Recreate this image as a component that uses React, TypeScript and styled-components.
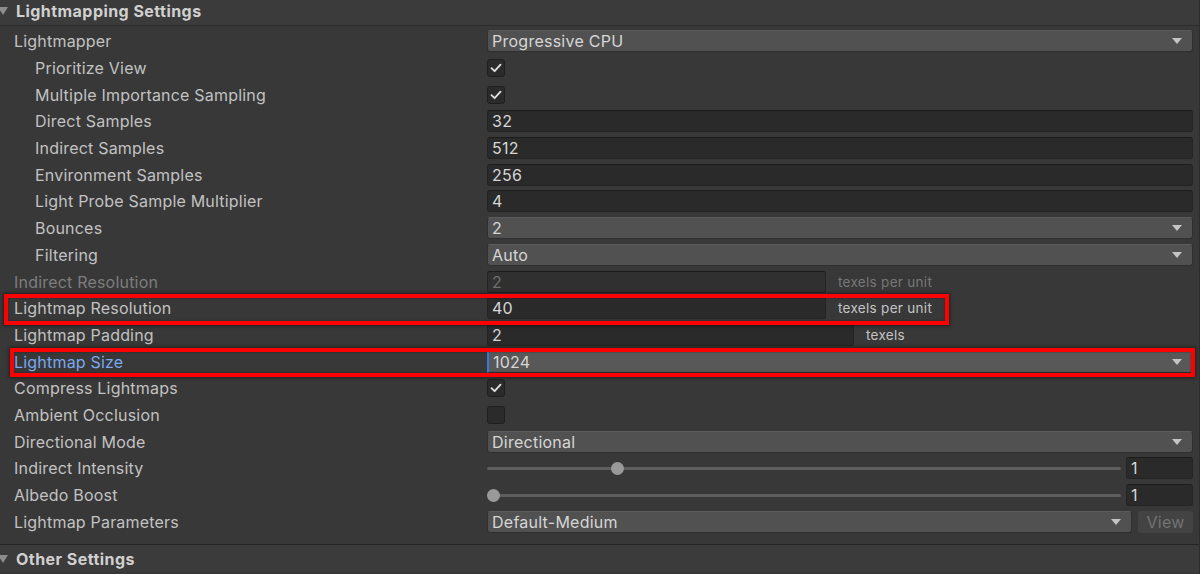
import React from "react";
import styled, { createGlobalStyle } from "styled-components";

const Global = createGlobalStyle`
  html, body { margin: 0; padding: 0; background: #383838; }
  body { font-family: Inter, "Noto Sans", sans-serif; font-size: 16px; color: #c4c4c4; overflow: hidden; }
`;

const Panel = styled.div`
  position: relative;
  width: 1200px;
  height: 574px;
  background: #383838;
  overflow: hidden;
  border-right: 1px solid #2c2c2c;
  box-sizing: border-box;
`;

const SectionHeader = styled.div<{ $top?: boolean }>`
  display: flex;
  align-items: center;
  gap: 8px;
  box-sizing: border-box;
  height: ${(p) => (p.$top ? 26 : 28)}px;
  padding-bottom: ${(p) => (p.$top ? 3 : 0)}px;
  background: #3b3b3b;
  border-bottom: ${(p) => (p.$top ? "1px solid #2d2d2d" : "none")};
  border-top: ${(p) => (p.$top ? "none" : "1px solid #242424")};
  font-weight: 700;
  color: #d0d0d0;
  font-size: 16px;
  letter-spacing: 0.45px;
`;

const Foldout = styled.span`
  width: 0;
  height: 0;
  margin-left: -2px;
  border-left: 5px solid transparent;
  border-right: 5px solid transparent;
  border-top: 8px solid #8c8c8c;
`;

const Rows = styled.div`
  padding-top: 2px;
  padding-bottom: 9px;
  display: flex;
  flex-direction: column;
`;

const Row = styled.div`
  display: grid;
  grid-template-columns: 487px 1fr;
  align-items: center;
  height: 26.7px;
  padding-right: 6px;
`;

const Label = styled.div<{ $indent?: boolean; $disabled?: boolean; $focus?: boolean }>`
  padding-left: ${(p) => (p.$indent ? 35 : 14)}px;
  color: ${(p) => (p.$disabled ? "#7d7d7d" : p.$focus ? "#7aa8ef" : "#c2c2c2")};
  white-space: nowrap;
  letter-spacing: 0.2px;
`;

const Value = styled.div`
  display: flex;
  align-items: center;
  gap: 6px;
  min-width: 0;
`;

const Dropdown = styled.div<{ $focus?: boolean }>`
  flex: 1;
  display: flex;
  align-items: center;
  justify-content: space-between;
  height: 22px;
  box-sizing: border-box;
  padding: 0 10px 0 4px;
  background: ${(p) => (p.$focus ? "#585858" : "#515151")};
  border: 1px solid #303030;
  border-top-color: #5a5a5a;
  border-left: ${(p) => (p.$focus ? "2px solid #3a79d8" : "1px solid #303030")};
  border-radius: ${(p) => (p.$focus ? "0 3px 3px 0" : "3px")};
  color: #d6d6d6;
  letter-spacing: 0.25px;
`;

const Arrow = styled.span`
  width: 0;
  height: 0;
  border-left: 5px solid transparent;
  border-right: 5px solid transparent;
  border-top: 6px solid #c4c4c4;
`;

const Field = styled.div<{ $w?: number; $disabled?: boolean }>`
  flex: ${(p) => (p.$w ? "0 0 auto" : "1")};
  width: ${(p) => (p.$w ? `${p.$w}px` : "auto")};
  height: 22px;
  box-sizing: border-box;
  display: flex;
  align-items: center;
  padding-left: 4px;
  background: ${(p) => (p.$disabled ? "#303030" : "#2a2a2a")};
  border: 1px solid #242424;
  border-top-color: #1c1c1c;
  border-radius: 3px;
  color: ${(p) => (p.$disabled ? "#6f6f6f" : "#d6d6d6")};
  letter-spacing: 0.25px;
`;

const Unit = styled.span<{ $disabled?: boolean }>`
  margin-left: 6px;
  font-size: 13.5px;
  color: ${(p) => (p.$disabled ? "#777" : "#c4c4c4")};
  letter-spacing: 0.3px;
`;

const Check = styled.div`
  width: 18px;
  height: 18px;
  box-sizing: border-box;
  background: #2b2b2b;
  border: 1px solid #1f1f1f;
  border-radius: 3px;
  display: flex;
  align-items: center;
  justify-content: center;
`;

const SliderTrack = styled.div`
  position: relative;
  flex: 1;
  height: 20px;
  margin-right: -1px;
  &::before {
    content: "";
    position: absolute;
    left: 0;
    right: 0;
    top: 50%;
    height: 3px;
    margin-top: -1px;
    background: #5e5e5e;
    border-radius: 2px;
  }
`;

const Thumb = styled.div`
  position: absolute;
  top: 50%;
  width: 13px;
  height: 13px;
  margin: -6px 0 0 -6.5px;
  border-radius: 50%;
  background: #999999;
`;

const NumField = styled(Field)`
  flex: 0 0 67px;
  width: 67px;
`;

const ViewButton = styled.div`
  flex: 0 0 55px;
  height: 22px;
  box-sizing: border-box;
  display: flex;
  align-items: center;
  justify-content: center;
  background: #434343;
  border-radius: 3px;
  color: #737373;
  letter-spacing: 0.3px;
`;

const Annotation = styled.div<{ $l: number; $t: number; $w: number; $h: number }>`
  position: absolute;
  left: ${(p) => p.$l}px;
  top: ${(p) => p.$t}px;
  width: ${(p) => p.$w}px;
  height: ${(p) => p.$h}px;
  box-sizing: border-box;
  border: 4px solid #ff0000;
  box-shadow: 0 0 3px 1px rgba(0, 0, 0, 0.45), inset 0 0 2px rgba(0, 0, 0, 0.4);
  pointer-events: none;
`;

const CheckMark = () => (
  <svg width="12" height="10" viewBox="0 0 12 10">
    <path d="M1.5 5.2 L4.6 8.2 L10.5 1.6" fill="none" stroke="#e0e0e0" strokeWidth="1.8" strokeLinecap="round" strokeLinejoin="round" />
  </svg>
);

const Drop = ({ text, focus }: { text: string; focus?: boolean }) => (
  <Dropdown $focus={focus}>
    <span>{text}</span>
    <Arrow />
  </Dropdown>
);

const Slider = ({ pos }: { pos: number }) => (
  <>
    <SliderTrack>
      <Thumb style={{ left: `calc(6.5px + (100% - 13px) * ${pos})` }} />
    </SliderTrack>
    <NumField>1</NumField>
  </>
);

export default function App() {
  return (
    <Panel>
      <Global />
      <SectionHeader $top>
        <Foldout />
        Lightmapping Settings
      </SectionHeader>
      <Rows>
        <Row>
          <Label>Lightmapper</Label>
          <Value><Drop text="Progressive CPU" /></Value>
        </Row>
        <Row>
          <Label $indent>Prioritize View</Label>
          <Value><Check><CheckMark /></Check></Value>
        </Row>
        <Row>
          <Label $indent>Multiple Importance Sampling</Label>
          <Value><Check><CheckMark /></Check></Value>
        </Row>
        <Row>
          <Label $indent>Direct Samples</Label>
          <Value><Field>32</Field></Value>
        </Row>
        <Row>
          <Label $indent>Indirect Samples</Label>
          <Value><Field>512</Field></Value>
        </Row>
        <Row>
          <Label $indent>Environment Samples</Label>
          <Value><Field>256</Field></Value>
        </Row>
        <Row>
          <Label $indent>Light Probe Sample Multiplier</Label>
          <Value><Field>4</Field></Value>
        </Row>
        <Row>
          <Label $indent>Bounces</Label>
          <Value><Drop text="2" /></Value>
        </Row>
        <Row>
          <Label $indent>Filtering</Label>
          <Value><Drop text="Auto" /></Value>
        </Row>
        <Row>
          <Label $disabled>Indirect Resolution</Label>
          <Value>
            <Field $w={339} $disabled>2</Field>
            <Unit $disabled>texels per unit</Unit>
          </Value>
        </Row>
        <Row>
          <Label>Lightmap Resolution</Label>
          <Value>
            <Field $w={339}>40</Field>
            <Unit>texels per unit</Unit>
          </Value>
        </Row>
        <Row>
          <Label>Lightmap Padding</Label>
          <Value>
            <Field $w={367}>2</Field>
            <Unit>texels</Unit>
          </Value>
        </Row>
        <Row>
          <Label $focus>Lightmap Size</Label>
          <Value><Drop text="1024" focus /></Value>
        </Row>
        <Row>
          <Label>Compress Lightmaps</Label>
          <Value><Check><CheckMark /></Check></Value>
        </Row>
        <Row>
          <Label>Ambient Occlusion</Label>
          <Value><Check /></Value>
        </Row>
        <Row>
          <Label>Directional Mode</Label>
          <Value><Drop text="Directional" /></Value>
        </Row>
        <Row>
          <Label>Indirect Intensity</Label>
          <Value><Slider pos={0.2} /></Value>
        </Row>
        <Row>
          <Label>Albedo Boost</Label>
          <Value><Slider pos={0} /></Value>
        </Row>
        <Row>
          <Label>Lightmap Parameters</Label>
          <Value>
            <Drop text="Default-Medium" />
            <ViewButton>View</ViewButton>
          </Value>
        </Row>
      </Rows>
      <SectionHeader>
        <Foldout />
        Other Settings
      </SectionHeader>
      <Annotation $l={4} $t={294} $w={945} $h={31} />
      <Annotation $l={10} $t={348} $w={1185} $h={29} />
    </Panel>
  );
}
